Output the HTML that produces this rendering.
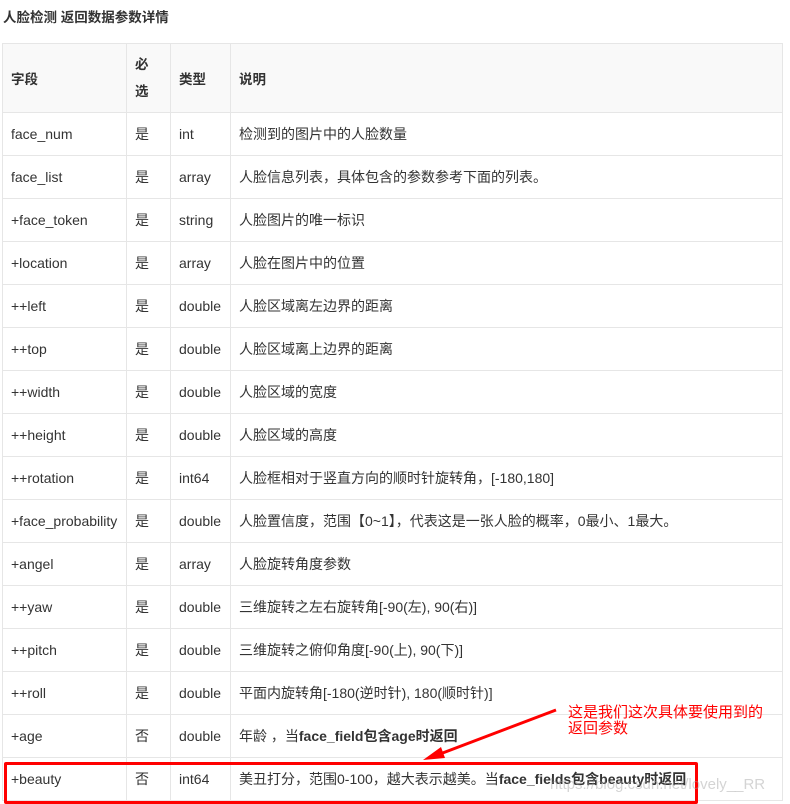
<!DOCTYPE html>
<html><head><meta charset="utf-8"><style>
body{margin:0;width:790px;height:804px;overflow:hidden;background:#fff;font-family:"Liberation Sans","Noto Sans CJK SC",sans-serif;font-size:14px;color:#333;position:relative}
.t{position:absolute;left:3px;top:6px;font-weight:bold;font-size:13.5px;color:#333}
table{position:absolute;left:2px;top:43px;border-collapse:collapse;width:781px}
td,th{border:1px solid #e6e6e6;padding:0 8px;height:42px;text-align:left;vertical-align:middle}
th{background:#f9f9f9;height:68px;font-weight:bold;font-size:13.5px}
th.n{line-height:27px}
.box{position:absolute;left:4px;top:762px;width:688px;height:36px;border:3px solid #f00;border-radius:2px}
.note{position:absolute;left:568px;top:705px;color:#f00;font-size:15px;line-height:16px}
.wm{position:absolute;left:550px;top:776px;color:rgba(160,160,160,.45);font-size:15px}
</style></head><body>
<div class="t">人脸检测 返回数据参数详情</div>
<table>
<colgroup><col style="width:124px"><col style="width:44px"><col style="width:60px"><col></colgroup>
<tr><th>字段</th><th class="n">必<br>选</th><th>类型</th><th>说明</th></tr>
<tr><td>face_num</td><td>是</td><td>int</td><td>检测到的图片中的人脸数量</td></tr>
<tr><td>face_list</td><td>是</td><td>array</td><td>人脸信息列表，具体包含的参数参考下面的列表。</td></tr>
<tr><td>+face_token</td><td>是</td><td>string</td><td>人脸图片的唯一标识</td></tr>
<tr><td>+location</td><td>是</td><td>array</td><td>人脸在图片中的位置</td></tr>
<tr><td>++left</td><td>是</td><td>double</td><td>人脸区域离左边界的距离</td></tr>
<tr><td>++top</td><td>是</td><td>double</td><td>人脸区域离上边界的距离</td></tr>
<tr><td>++width</td><td>是</td><td>double</td><td>人脸区域的宽度</td></tr>
<tr><td>++height</td><td>是</td><td>double</td><td>人脸区域的高度</td></tr>
<tr><td>++rotation</td><td>是</td><td>int64</td><td>人脸框相对于竖直方向的顺时针旋转角，[-180,180]</td></tr>
<tr><td>+face_probability</td><td>是</td><td>double</td><td>人脸置信度，范围【0~1】，代表这是一张人脸的概率，0最小、1最大。</td></tr>
<tr><td>+angel</td><td>是</td><td>array</td><td>人脸旋转角度参数</td></tr>
<tr><td>++yaw</td><td>是</td><td>double</td><td>三维旋转之左右旋转角[-90(左), 90(右)]</td></tr>
<tr><td>++pitch</td><td>是</td><td>double</td><td>三维旋转之俯仰角度[-90(上), 90(下)]</td></tr>
<tr><td>++roll</td><td>是</td><td>double</td><td>平面内旋转角[-180(逆时针), 180(顺时针)]</td></tr>
<tr><td>+age</td><td>否</td><td>double</td><td>年龄 ，当<b>face_field包含age时返回</b></td></tr>
<tr><td>+beauty</td><td>否</td><td>int64</td><td>美丑打分，范围0-100，越大表示越美。当<b>face_fields包含beauty时返回</b></td></tr>
</table>
<div class="box"></div>
<div class="wm">https://blog.csdn.net/lovely__RR</div>
<svg style="position:absolute;left:0;top:0" width="790" height="804"><line x1="556" y1="710" x2="440" y2="754" stroke="#f00" stroke-width="3"/><polygon points="423,760 441,747 445,758" fill="#f00"/></svg>
<div class="note">这是我们这次具体要使用到的<br>返回参数</div>
</body></html>
